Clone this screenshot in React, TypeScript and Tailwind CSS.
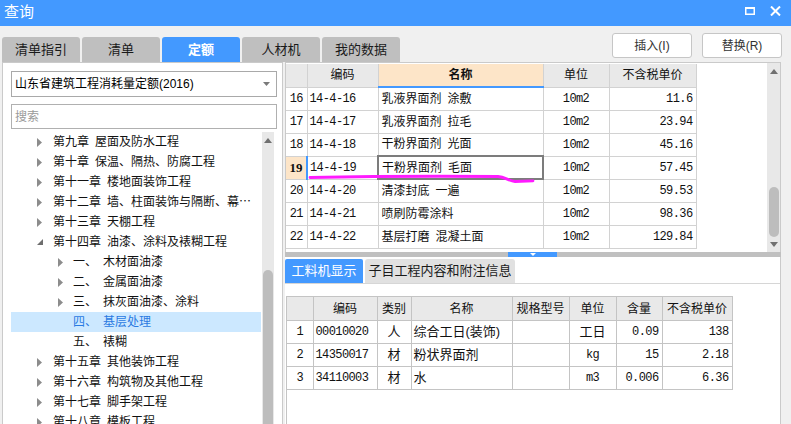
import React from 'react';

const cjk = "font-['Liberation_Sans','Noto_Sans_CJK_SC',sans-serif]";
const mono = "font-['Liberation_Mono','Noto_Sans_CJK_SC',monospace] tracking-[-0.6px]";

type TreeRow = { lvl: 1 | 2; head: string; name: string; open?: boolean; leaf?: boolean; sel?: boolean };

const tree: TreeRow[] = [
    { lvl: 1, head: '第九章', name: '屋面及防水工程' },
    { lvl: 1, head: '第十章', name: '保温、隔热、防腐工程' },
    { lvl: 1, head: '第十一章', name: '楼地面装饰工程' },
    { lvl: 1, head: '第十二章', name: '墙、柱面装饰与隔断、幕⋯' },
    { lvl: 1, head: '第十三章', name: '天棚工程' },
    { lvl: 1, head: '第十四章', name: '油漆、涂料及裱糊工程', open: true },
    { lvl: 2, head: '一、', name: '木材面油漆' },
    { lvl: 2, head: '二、', name: '金属面油漆' },
    { lvl: 2, head: '三、', name: '抹灰面油漆、涂料' },
    { lvl: 2, head: '四、', name: '基层处理', leaf: true, sel: true },
    { lvl: 2, head: '五、', name: '裱糊', leaf: true },
    { lvl: 1, head: '第十五章', name: '其他装饰工程' },
    { lvl: 1, head: '第十六章', name: '构筑物及其他工程' },
    { lvl: 1, head: '第十七章', name: '脚手架工程' },
    { lvl: 1, head: '第十八章', name: '模板工程' },
];

const quotaRows = [
    { no: 16, code: '14-4-16', name: '乳液界面剂 涂敷', unit: '10m2', price: '11.6' },
    { no: 17, code: '14-4-17', name: '乳液界面剂 拉毛', unit: '10m2', price: '23.94' },
    { no: 18, code: '14-4-18', name: '干粉界面剂 光面', unit: '10m2', price: '45.16' },
    { no: 19, code: '14-4-19', name: '干粉界面剂 毛面', unit: '10m2', price: '57.45' },
    { no: 20, code: '14-4-20', name: '清漆封底 一遍', unit: '10m2', price: '59.53' },
    { no: 21, code: '14-4-21', name: '喷刷防霉涂料', unit: '10m2', price: '98.36' },
    { no: 22, code: '14-4-22', name: '基层打磨 混凝土面', unit: '10m2', price: '129.84' },
];

const materials = [
    { no: 1, code: '00010020', kind: '人', name: '综合工日(装饰)', unit: '工日', unitCjk: true, qty: '0.09', price: '138' },
    { no: 2, code: '14350017', kind: '材', name: '粉状界面剂', unit: 'kg', qty: '15', price: '2.18' },
    { no: 3, code: '34110003', kind: '材', name: '水', unit: 'm3', qty: '0.006', price: '6.36' },
];

function Caret({ open }: { open?: boolean }) {
    if (open) {
        return (
            <svg width="6" height="6" viewBox="0 0 6 6" className="block">
                <path d="M6 0 L6 6 L0 6 Z" fill="#6e6e6e" />
            </svg>
        );
    }
    return (
        <svg width="5" height="9" viewBox="0 0 5 9" className="block">
            <path d="M0 0 L5 4.5 L0 9 Z" fill="#8c8c8c" />
        </svg>
    );
}

function ArrowUp() {
    return (
        <svg width="8" height="5" viewBox="0 0 8 5" className="block">
            <path d="M0 5 L4 0 L8 5 Z" fill="#707070" />
        </svg>
    );
}

function ArrowDown() {
    return (
        <svg width="8" height="5" viewBox="0 0 8 5" className="block">
            <path d="M0 0 L4 5 L8 0 Z" fill="#707070" />
        </svg>
    );
}

export default function App() {
    const tabs = ['清单指引', '清单', '定额', '人材机', '我的数据'];

    return (
        <div className={`relative w-[791px] h-[424px] overflow-hidden bg-[#f0f0f0] flex flex-col ${cjk}`}>
            {/* Title bar */}
            <div className="h-[26px] bg-[#4399ff] flex items-center justify-between pl-[4px] pr-[10px] shrink-0">
                <span className="text-white text-[15px] leading-none -mt-[4px]">查询</span>
                <div className="flex items-center gap-[15px] -mt-[4px]">
                    <svg width="10" height="8" viewBox="0 0 10 8">
                        <rect x="0.75" y="1" width="8.5" height="6.25" fill="none" stroke="white" strokeWidth="1.5" />
                        <rect x="0" y="0" width="10" height="2" fill="white" />
                    </svg>
                    <svg width="11" height="10" viewBox="0 0 11 10">
                        <path d="M1 0.5 L10 9.5 M10 0.5 L1 9.5" stroke="white" strokeWidth="2" />
                    </svg>
                </div>
            </div>

            {/* Tabs + buttons */}
            <div className="h-[36px] flex justify-between shrink-0 pl-[2px] pr-[9px]">
                <div className="flex gap-[2px] self-end">
                    {tabs.map((t) => (
                        <div
                            key={t}
                            className={
                                t === '定额'
                                    ? 'w-[78px] h-[25px] rounded-t-[3px] bg-[#4399ff] text-white font-bold text-[13px] flex items-center justify-center'
                                    : 'w-[78px] h-[25px] rounded-t-[3px] bg-[#bfbfbf] text-[#1a1a1a] text-[13px] flex items-center justify-center'
                            }
                        >
                            {t}
                        </div>
                    ))}
                </div>
                <div className="flex gap-[10px] mt-[7px]">
                    <button className="w-[80px] h-[25px] bg-white border border-[#c6c6c6] rounded-[3px] text-[12px] text-[#333]">插入(I)</button>
                    <button className="w-[80px] h-[25px] bg-white border border-[#c6c6c6] rounded-[3px] text-[12px] text-[#333]">替换(R)</button>
                </div>
            </div>

            {/* Main */}
            <div className="flex-1 flex pl-[2px] pr-[10px] min-h-0">
                {/* Left panel */}
                <div className="w-[281px] bg-white border border-[#cacaca] border-b-0 flex flex-col px-[8px] min-h-0">
                    <div className="mt-[8px] h-[26px] w-[266px] border border-[#a9a9a9] flex items-center justify-between pl-[3px] pr-[6px] shrink-0">
                        <span className="text-[12px] text-black">山东省建筑工程消耗量定额(2016)</span>
                        <svg width="7" height="4" viewBox="0 0 7 4">
                            <path d="M0 0 L3.5 4 L7 0 Z" fill="#7a7a7a" />
                        </svg>
                    </div>
                    <div className="mt-[7px] h-[25px] w-[266px] border border-[#b0b0b0] flex items-center pl-[3px] shrink-0">
                        <span className="text-[12px] text-[#9a9a9a]">搜索</span>
                    </div>
                    <div className="mt-[3px] flex flex-1 min-h-0">
                        <div className="w-[253px] overflow-hidden">
                            {tree.map((r) => (
                                <div
                                    key={r.head + r.name}
                                    className={`h-[20px] flex items-center text-[12px] ${r.sel ? 'bg-[#cce8ff] text-[#2a7ae2]' : 'text-[#111]'}`}
                                >
                                    <div className={`${r.lvl === 1 ? 'w-[42px] pl-[26px]' : 'w-[62px] pl-[47px]'} flex items-center shrink-0`}>
                                        {!r.leaf && <Caret open={r.open} />}
                                    </div>
                                    <span className="whitespace-nowrap">{r.head}</span>
                                    <span className="whitespace-nowrap ml-[6px]">{r.name}</span>
                                </div>
                            ))}
                        </div>
                        <div className="w-[12px] ml-[1px] bg-[#e8e8e8] flex flex-col items-center">
                            <div className="h-[14px] flex items-center justify-center pt-[2px]">
                                <ArrowUp />
                            </div>
                            <div className="h-[124px]" />
                            <div className="flex-1 w-[10px] rounded-t-full bg-[#bdbdbd]" />
                        </div>
                    </div>
                </div>

                {/* Right panel */}
                <div className="w-[496px] ml-[2px] flex flex-col min-h-0">
                    {/* Quota table */}
                    <div className="h-[190px] border-t border-l border-r border-[#cacaca] bg-white flex shrink-0">
                        <div className="flex-1 pt-[1px]">
                            <table className="table-fixed border-collapse text-[12px] text-[#111]">
                                <colgroup>
                                    <col className="w-[21px]" />
                                    <col className="w-[71px]" />
                                    <col className="w-[165px]" />
                                    <col className="w-[66px]" />
                                    <col className="w-[87px]" />
                                </colgroup>
                                <thead>
                                    <tr className="h-[23px]">
                                        <th className="border border-[#d2d2d2] border-t-0 border-l-0 bg-[#e9e9e9]" />
                                        <th className="border border-[#d2d2d2] border-t-0 bg-[#e9e9e9] font-normal">编码</th>
                                        <th className="border border-[#d2d2d2] border-t-0 border-b-2 border-b-[#4399ff] bg-[#fde5c8] font-bold">名称</th>
                                        <th className="border border-[#d2d2d2] border-t-0 bg-[#e9e9e9] font-normal">单位</th>
                                        <th className="border border-[#d2d2d2] border-t-0 bg-[#e9e9e9] font-normal">不含税单价</th>
                                    </tr>
                                </thead>
                                <tbody>
                                    {quotaRows.map((r) => {
                                        const cur = r.no === 19;
                                        return (
                                            <tr key={r.no} className="h-[23px]">
                                                <td className={`border border-[#d2d2d2] border-l-0 text-center ${mono} ${cur ? "bg-[#fde5c8] font-bold font-['Liberation_Serif',serif] text-[13px] tracking-normal" : ''}`}>
                                                    {r.no}
                                                </td>
                                                <td className={`border border-[#d2d2d2] pl-[2px] ${mono} ${cur ? 'border-l-2 border-l-[#4399ff]' : ''}`}>{r.code}</td>
                                                <td className={`border pl-[3px] whitespace-nowrap ${cur ? 'border-2 border-[#7c7c7c]' : 'border-[#d2d2d2]'}`}>
                                                    {r.name.split(' ')[0]}
                                                    {r.name.includes(' ') && <span className="ml-[6px]">{r.name.split(' ')[1]}</span>}
                                                </td>
                                                <td className={`border border-[#d2d2d2] text-center ${mono}`}>{r.unit}</td>
                                                <td className={`border border-[#d2d2d2] text-right pr-[3px] ${mono}`}>{r.price}</td>
                                            </tr>
                                        );
                                    })}
                                </tbody>
                            </table>
                        </div>
                        <div className="w-[13px] bg-[#e8e8e8] flex flex-col items-center">
                            <div className="h-[14px] flex items-center justify-center pt-[2px]">
                                <ArrowUp />
                            </div>
                            <div className="h-[110px]" />
                            <div className="h-[50px] w-[10px] rounded-full bg-[#bdbdbd]" />
                            <div className="flex-1 flex items-end justify-center pb-[5px]">
                                <ArrowDown />
                            </div>
                        </div>
                    </div>

                    {/* Splitter */}
                    <div className="h-[5px] bg-[#c0c0c0] flex shrink-0">
                        <div className="w-[223px]" />
                        <div className="w-[49px] bg-[#4399ff] flex justify-center">
                            <svg width="6" height="3" viewBox="0 0 6 3" className="block mt-[1px]">
                                <path d="M0 0 L3 3 L6 0 Z" fill="white" />
                            </svg>
                        </div>
                    </div>

                    {/* Bottom area */}
                    <div className="flex-1 bg-white border-r border-[#cacaca] flex flex-col min-h-0">
                        <div className="h-[26px] pt-[2px] flex gap-[2px] shrink-0">
                            <div className="w-[78px] h-[24px] bg-[#4399ff] text-white text-[13px] flex items-center justify-center rounded-t-[2px]">工料机显示</div>
                            <div className="w-[150px] h-[24px] bg-[#e1e1e1] text-[#1a1a1a] text-[13px] flex items-center justify-center rounded-t-[3px]">子目工程内容和附注信息</div>
                        </div>
                        <div className="flex-1 border-t border-[#d6d6d6] pt-[12px] pl-[1px] flex flex-col min-h-0">
                            <div className="flex-1 border-l border-[#c4c4c4]">
                                <table className="table-fixed border-collapse text-[12px] text-[#111]">
                                    <colgroup>
                                        <col className="w-[26px]" />
                                        <col className="w-[64px]" />
                                        <col className="w-[34px]" />
                                        <col className="w-[101px]" />
                                        <col className="w-[57px]" />
                                        <col className="w-[47px]" />
                                        <col className="w-[46px]" />
                                        <col className="w-[70px]" />
                                    </colgroup>
                                    <thead>
                                        <tr className="h-[24px] bg-[#e9e9e9]">
                                            <th className="border border-[#c4c4c4] border-l-0" />
                                            <th className="border border-[#c4c4c4] font-normal">编码</th>
                                            <th className="border border-[#c4c4c4] font-normal">类别</th>
                                            <th className="border border-[#c4c4c4] font-normal">名称</th>
                                            <th className="border border-[#c4c4c4] font-normal whitespace-nowrap">规格型号</th>
                                            <th className="border border-[#c4c4c4] font-normal">单位</th>
                                            <th className="border border-[#c4c4c4] font-normal">含量</th>
                                            <th className="border border-[#c4c4c4] font-normal whitespace-nowrap">不含税单价</th>
                                        </tr>
                                    </thead>
                                    <tbody>
                                        {materials.map((m) => (
                                            <tr key={m.no} className="h-[23px]">
                                                <td className={`border border-[#c4c4c4] border-l-0 text-center ${mono}`}>{m.no}</td>
                                                <td className={`border border-[#c4c4c4] pl-[2px] ${mono}`}>{m.code}</td>
                                                <td className="border border-[#c4c4c4] text-center text-[13px]">{m.kind}</td>
                                                <td className="border border-[#c4c4c4] pl-[2px] whitespace-nowrap text-[13px]">{m.name}</td>
                                                <td className="border border-[#c4c4c4]" />
                                                <td className={`border border-[#c4c4c4] text-center ${m.unitCjk ? 'text-[13px]' : mono}`}>{m.unit}</td>
                                                <td className={`border border-[#c4c4c4] text-right pr-[3px] ${mono}`}>{m.qty}</td>
                                                <td className={`border border-[#c4c4c4] text-right pr-[3px] ${mono}`}>{m.price}</td>
                                            </tr>
                                        ))}
                                    </tbody>
                                </table>
                            </div>
                        </div>
                    </div>
                </div>
            </div>

            {/* Hand-drawn annotation */}
            <svg className="absolute left-0 top-0 pointer-events-none" width="791" height="424" viewBox="0 0 791 424">
                <path
                    d="M310 177.5 C 360 176.5, 440 176, 498 176.5 C 505 177, 509 181, 515 181.5 L 533 180.8"
                    fill="none"
                    stroke="#ff1aff"
                    strokeWidth="2.8"
                    strokeLinecap="round"
                />
            </svg>
        </div>
    );
}
